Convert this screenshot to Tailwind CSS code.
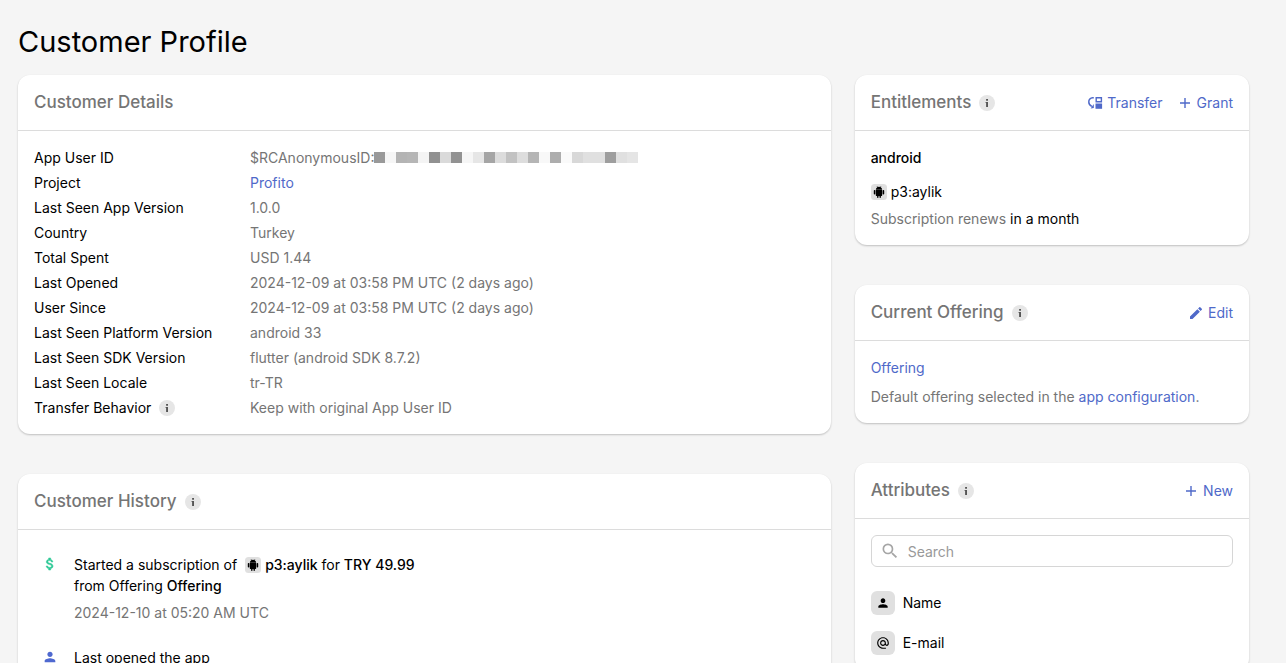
<!DOCTYPE html>
<html lang="en">
<head>
<meta charset="utf-8">
<meta name="viewport" content="width=device-width, initial-scale=1">
<title>Customer Profile</title>
<script src="https://cdn.jsdelivr.net/npm/@tailwindcss/browser@4"></script>
</head>
<body class="min-h-screen bg-[#f5f5f5] font-['Inter',sans-serif] text-sm text-black">
<svg class="hidden" aria-hidden="true">
  <symbol id="info" viewBox="0 0 16 16"><circle cx="8" cy="8" r="8" fill="#e6e6e6"/><path d="M7.100 4H9v1.800H7.100zM6.600 7H9v5H7.100V8.100h-.5z" fill="#555"/></symbol>
  <symbol id="plus" viewBox="0 0 12 12"><path d="M6 1v10M1 6h10" stroke="currentColor" stroke-width="1.4" fill="none"/></symbol>
  <symbol id="person" viewBox="0 0 24 24"><path d="M12 12c2.21 0 4-1.79 4-4s-1.79-4-4-4-4 1.79-4 4 1.79 4 4 4zm0 2c-2.67 0-8 1.34-8 4v2h16v-2c0-2.66-5.33-4-8-4z" fill="currentColor"/></symbol>
  <symbol id="android" viewBox="0 0 16 16"><rect width="16" height="16" rx="3.5" fill="#e0e0e0"/><path d="M4.8 6.1h6.4v5.2a.6.6 0 0 1-.6.6h-.7v1.3a.7.7 0 0 1-1.4 0v-1.3h-1v1.3a.7.7 0 0 1-1.4 0v-1.3h-.7a.6.6 0 0 1-.6-.6zM4.8 5.7a3.2 3.2 0 0 1 1.5-2.5l-.6-.9.3-.2.7.9a3.4 3.4 0 0 1 2.6 0l.7-.9.3.2-.6.9a3.2 3.2 0 0 1 1.5 2.5zM3.5 6a.7.7 0 0 1 .8.7v3a.7.7 0 0 1-1.5 0v-3a.7.7 0 0 1 .7-.7zM12.5 6a.7.7 0 0 1 .7.7v3a.7.7 0 0 1-1.5 0v-3a.7.7 0 0 1 .8-.7z" fill="#000"/></symbol>
</svg>
<main class="pt-5 pr-[37px] pl-[18px]">
  <h1 class="text-[29px] leading-11">Customer Profile</h1>
  <div class="mt-[11px] grid grid-cols-3 items-start gap-6">
    <div class="col-span-2 flex flex-col gap-10">
      <section class="rounded-xl bg-white shadow-[0_1px_2px_rgba(0,0,0,0.22)]">
        <header class="flex h-14 items-center border-b border-[#dcdcdc] px-4">
          <h2 class="text-[17px] font-medium text-[#757575]">Customer Details</h2>
        </header>
        <dl class="grid grid-cols-[216px_1fr] px-4 py-3.5 leading-[25px] [&>dd]:text-[#757575]">
          <dt>App User ID</dt>
          <dd class="flex items-center">$RCAnonymousID:
            <span class="flex h-[11px] *:w-[11px]" role="img" aria-label="Redacted identifier">
              <i class="bg-[#999]"></i><i class="bg-[#f6f6f6]"></i><i class="bg-[#b4b4b4]"></i><i class="bg-[#b6b6b6]"></i><i class="bg-[#f4f4f4]"></i><i class="bg-[#919191]"></i><i class="bg-[#dadada]"></i><i class="bg-[#929292]"></i><i class="bg-[#f6f6f6]"></i><i class="bg-[#e6e6e6]"></i><i class="bg-[#a5a5a5]"></i><i class="bg-[#dcdcdc]"></i><i class="bg-[#c2c2c2]"></i><i class="bg-[#dddddd]"></i><i class="bg-[#b5b5b5]"></i><i class="bg-[#f8f8f8]"></i><i class="bg-[#adadad]"></i><i class="bg-[#fafafa]"></i><i class="bg-[#d8d8d8]"></i><i class="bg-[#e0e0e0]"></i><i class="bg-[#e0e0e0]"></i><i class="bg-[#9e9e9e]"></i><i class="bg-[#e0e0e0]"></i><i class="bg-[#e5e5e5]"></i>
            </span>
          </dd>
          <dt>Project</dt><dd><a href="#" class="text-[#4f69c9]">Profito</a></dd>
          <dt>Last Seen App Version</dt><dd>1.0.0</dd>
          <dt>Country</dt><dd>Turkey</dd>
          <dt>Total Spent</dt><dd>USD 1.44</dd>
          <dt>Last Opened</dt><dd>2024-12-09 at 03:58 PM UTC (2 days ago)</dd>
          <dt>User Since</dt><dd>2024-12-09 at 03:58 PM UTC (2 days ago)</dd>
          <dt>Last Seen Platform Version</dt><dd>android 33</dd>
          <dt>Last Seen SDK Version</dt><dd>flutter (android SDK 8.7.2)</dd>
          <dt>Last Seen Locale</dt><dd>tr-TR</dd>
          <dt class="flex items-center gap-2">Transfer Behavior <button type="button" aria-label="About transfer behavior"><svg class="block size-4"><use href="#info"/></svg></button></dt><dd>Keep with original App User ID</dd>
        </dl>
      </section>

      <section class="rounded-xl bg-white shadow-[0_1px_2px_rgba(0,0,0,0.22)]">
        <header class="flex h-14 items-center gap-2 border-b border-[#dcdcdc] px-4">
          <h2 class="text-[17px] font-medium text-[#757575]">Customer History</h2>
          <button type="button" aria-label="About customer history"><svg class="block size-4"><use href="#info"/></svg></button>
        </header>
        <ul class="flex flex-col gap-6 px-4 py-6 leading-[21px]">
          <li class="flex gap-2">
            <svg class="mt-0.5 h-4 w-8 shrink-0 text-[#2cc995]" viewBox="0 0 24 24" aria-hidden="true"><path d="M11.8 10.9c-2.27-.59-3-1.2-3-2.15 0-1.09 1.01-1.85 2.7-1.85 1.78 0 2.44.85 2.5 2.1h2.21c-.07-1.72-1.12-3.3-3.21-3.81V3h-3v2.16c-1.94.42-3.5 1.68-3.5 3.61 0 2.31 1.91 3.46 4.7 4.13 2.5.6 3 1.48 3 2.41 0 .69-.49 1.79-2.7 1.79-2.06 0-2.87-.92-2.98-2.1h-2.2c.12 2.19 1.76 3.42 3.68 3.83V21h3v-2.15c1.95-.37 3.5-1.5 3.5-3.55 0-2.84-2.43-3.81-4.7-4.4z" fill="currentColor" stroke="currentColor" stroke-width=".8"/></svg>
            <div>
              <p class="flex items-center gap-1"><span>Started a subscription of</span><svg class="ml-1 size-4" aria-hidden="true"><use href="#android"/></svg><span><span class="font-medium">p3:aylik</span> for <span class="font-medium">TRY 49.99</span></span></p>
              <p>from Offering <span class="font-medium">Offering</span></p>
              <p class="mt-1.5 text-[#757575]">2024-12-10 at 05:20 AM UTC</p>
            </div>
          </li>
          <li class="flex gap-2">
            <svg class="mt-0.5 h-4 w-8 shrink-0 text-[#4f69d0]" aria-hidden="true"><use href="#person"/></svg>
            <p>Last opened the app</p>
          </li>
        </ul>
      </section>
    </div>

    <div class="flex flex-col gap-10">
      <section class="rounded-xl bg-white shadow-[0_1px_2px_rgba(0,0,0,0.22)]">
        <header class="flex h-14 items-center gap-2 border-b border-[#dcdcdc] px-4">
          <h2 class="text-[17px] font-medium text-[#757575]">Entitlements</h2>
          <button type="button" aria-label="About entitlements"><svg class="block size-4"><use href="#info"/></svg></button>
          <div class="ml-auto flex gap-4 text-[#4f69c9]">
            <button type="button" class="flex items-center gap-1">
              <svg class="size-4" viewBox="0 0 16 16" aria-hidden="true"><path d="M6.800 2.800H5.600A4 4 0 0 0 1.800 7c0 2 1.100 3.600 3.100 4.400" fill="none" stroke="currentColor" stroke-width="1.500"/><path d="M3.600 13.600 6.800 13V9z" fill="currentColor"/><path d="M9.200 2.700h5.200v4H9.200z" fill="none" stroke="currentColor" stroke-width="1.400"/><path d="M8.500 8.500h6.600v5.300H8.500z" fill="currentColor"/></svg>Transfer</button>
            <button type="button" class="flex items-center gap-1.5"><svg class="size-3"><use href="#plus"/></svg>Grant</button>
          </div>
        </header>
        <div class="p-4 leading-[21px]">
          <h3 class="font-medium">android</h3>
          <p class="mt-[13px] flex items-center gap-1"><svg class="size-4" aria-hidden="true"><use href="#android"/></svg>p3:aylik</p>
          <p class="mt-1.5 text-[#757575]">Subscription renews <span class="text-black">in a month</span></p>
        </div>
      </section>

      <section class="rounded-xl bg-white shadow-[0_1px_2px_rgba(0,0,0,0.22)]">
        <header class="flex h-14 items-center gap-2 border-b border-[#dcdcdc] px-4">
          <h2 class="text-[17px] font-medium text-[#757575]">Current Offering</h2>
          <button type="button" aria-label="About the current offering"><svg class="block size-4"><use href="#info"/></svg></button>
          <button type="button" class="ml-auto flex items-center gap-1 text-[#4f69c9]"><svg class="size-4" viewBox="0 0 24 24" aria-hidden="true"><path d="M3 17.250V21h3.750L17.810 9.940l-3.750-3.750L3 17.250zM20.710 7.040a1 1 0 0 0 0-1.410l-2.340-2.340a1 1 0 0 0-1.410 0l-1.830 1.830 3.750 3.750 1.830-1.830z" fill="currentColor"/></svg>Edit</button>
        </header>
        <div class="p-4 leading-[21px]">
          <p><a href="#" class="text-[#4f69c9]">Offering</a></p>
          <p class="mt-2 text-[#757575]">Default offering selected in the <a href="#" class="text-[#4f69c9]">app configuration</a>.</p>
        </div>
      </section>

      <section class="rounded-xl bg-white shadow-[0_1px_2px_rgba(0,0,0,0.22)]">
        <header class="flex h-14 items-center gap-2 border-b border-[#dcdcdc] px-4">
          <h2 class="text-[17px] font-medium text-[#757575]">Attributes</h2>
          <button type="button" aria-label="About attributes"><svg class="block size-4"><use href="#info"/></svg></button>
          <button type="button" class="ml-auto flex items-center gap-1.5 text-[#4f69c9]"><svg class="size-3"><use href="#plus"/></svg>New</button>
        </header>
        <div class="p-4">
          <label class="flex h-8 items-center gap-2 rounded-md border border-[#d6d6d6] px-2">
            <svg class="size-5 shrink-0 text-[#a6a6a6]" viewBox="0 0 24 24" aria-hidden="true"><path d="M15.500 14h-.79l-.28-.27A6.471 6.471 0 0 0 16 9.500 6.500 6.500 0 1 0 9.500 16c1.610 0 3.090-.59 4.230-1.570l.27.28v.79l5 4.990L20.490 19l-4.990-5zm-6 0C7.010 14 5 11.990 5 9.500S7.010 5 9.500 5 14 7.010 14 9.500 11.990 14 9.500 14z" fill="currentColor"/></svg>
            <input type="search" placeholder="Search" aria-label="Search attributes" class="w-full min-w-0 pt-0.5 outline-none placeholder:text-[#999]">
          </label>
          <ul class="mt-6 flex flex-col gap-4">
            <li class="flex items-center gap-2"><span class="flex size-6 items-center justify-center rounded-md bg-[#e0e0e0]"><svg class="size-3.5" aria-hidden="true"><use href="#person"/></svg></span>Name</li>
            <li class="flex items-center gap-2"><span class="flex size-6 items-center justify-center rounded-md bg-[#e0e0e0]"><svg class="size-3.5" viewBox="0 0 24 24" aria-hidden="true"><path d="M12 1.950c-5.520 0-10 4.480-10 10s4.480 10 10 10h5v-2h-5c-4.340 0-8-3.660-8-8s3.660-8 8-8 8 3.660 8 8v1.430c0 .79-.71 1.570-1.500 1.570s-1.500-.78-1.500-1.570v-1.430c0-2.760-2.240-5-5-5s-5 2.240-5 5 2.240 5 5 5c1.380 0 2.640-.56 3.540-1.470.65.89 1.770 1.470 2.960 1.470 1.970 0 3.500-1.600 3.500-3.570v-1.430c0-5.520-4.480-10-10-10zm0 13c-1.660 0-3-1.340-3-3s1.340-3 3-3 3 1.340 3 3-1.340 3-3 3z" fill="#000"/></svg></span>E-mail</li>
          </ul>
        </div>
      </section>
    </div>
  </div>
</main>
</body>
</html>
